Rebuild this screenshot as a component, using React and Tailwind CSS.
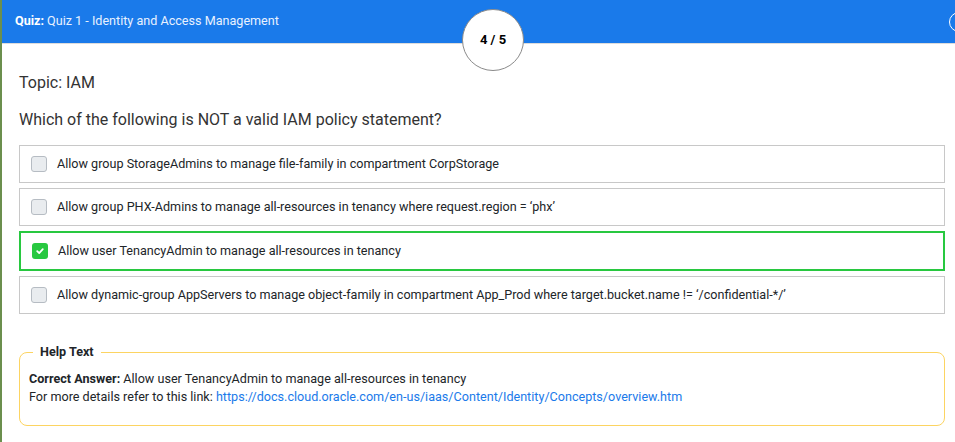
import React from "react";

const options = [
  { text: "Allow group StorageAdmins to manage file-family in compartment CorpStorage", checked: false },
  { text: "Allow group PHX-Admins to manage all-resources in tenancy where request.region = \u2018phx\u2019", checked: false },
  { text: "Allow user TenancyAdmin to manage all-resources in tenancy", checked: true },
  { text: "Allow dynamic-group AppServers to manage object-family in compartment App_Prod where target.bucket.name != \u2018/confidential-*/\u2019", checked: false },
];

function Box({ checked }) {
  if (checked) {
    return (
      <span className="flex h-[16px] w-[16px] shrink-0 items-center justify-center rounded-[3px] bg-[#28c840]">
        <svg width="10" height="10" viewBox="0 0 10 10">
          <path d="M2.2 5.2 L4.2 7.1 L7.8 3.2" fill="none" stroke="white" strokeWidth="1.8" strokeLinecap="round" strokeLinejoin="round" />
        </svg>
      </span>
    );
  }
  return <span className="h-[16px] w-[16px] shrink-0 rounded-[3px] border border-[#b6bcc3] bg-[#e9ecef]" />;
}

export default function App() {
  return (
    <div className="flex h-[442px] w-[955px] overflow-hidden bg-white text-[#212529]" style={{ fontFamily: "Roboto, 'Liberation Sans', sans-serif" }}>
      <div className="w-[2px] shrink-0 bg-[#6b8f4e]" />
      <div className="relative flex min-w-0 flex-1 flex-col">
        <div className="relative flex h-[44px] shrink-0 items-center border-b border-[#dcdcdc] bg-[#1a7aea] pl-[13px] text-[12.6px] text-white">
          <span className="font-bold">Quiz:</span>
          <span className="ml-[3px] text-[#e8f1ff]">Quiz 1 - Identity and Access Management</span>
          <span className="absolute left-[947px] top-[12px] h-[20px] w-[20px] rounded-full border-[1.5px] border-white" />
        </div>
        <div className="absolute left-[460px] top-[9px] flex h-[62px] w-[62px] items-center justify-center rounded-full border border-[#8a8a8a] bg-white text-[13px] font-bold text-black">
          4 / 5
        </div>
        <div className="flex flex-col pl-[17px] pr-[10px]">
          <div className="mt-[29px] text-[16px] leading-[20px] text-[#333]">Topic: IAM</div>
          <div className="mt-[17px] text-[16px] leading-[20px] text-[#333]">Which of the following is NOT a valid IAM policy statement?</div>
          <div className="mt-[15px] flex flex-col gap-[5px]">
            {options.map((o, i) => (
              <div
                key={i}
                className={
                  o.checked
                    ? "flex h-[40px] items-center gap-[10px] border-2 border-[#28c840] pl-[11px] text-[12.6px]"
                    : "flex h-[38px] items-center gap-[10px] border border-[#c8c8c8] pl-[11px] text-[12.6px]"
                }
              >
                <Box checked={o.checked} />
                <span>{o.text}</span>
              </div>
            ))}
          </div>
          <fieldset className="mt-[29px] h-[83px] rounded-[8px] border border-[#fcd462] px-[9px] pb-[8px] pt-0 text-[12.6px] leading-[18px]">
            <legend className="ml-[4px] px-[7px] text-[12.6px] font-bold">Help Text</legend>
            <div className="mt-[9px]">
              <span className="font-bold">Correct Answer:</span> Allow user TenancyAdmin to manage all-resources in tenancy
            </div>
            <div>
              For more details refer to this link:{" "}
              <a className="text-[#1a7aea]" href="#">https://docs.cloud.oracle.com/en-us/iaas/Content/Identity/Concepts/overview.htm</a>
            </div>
          </fieldset>
        </div>
      </div>
    </div>
  );
}
